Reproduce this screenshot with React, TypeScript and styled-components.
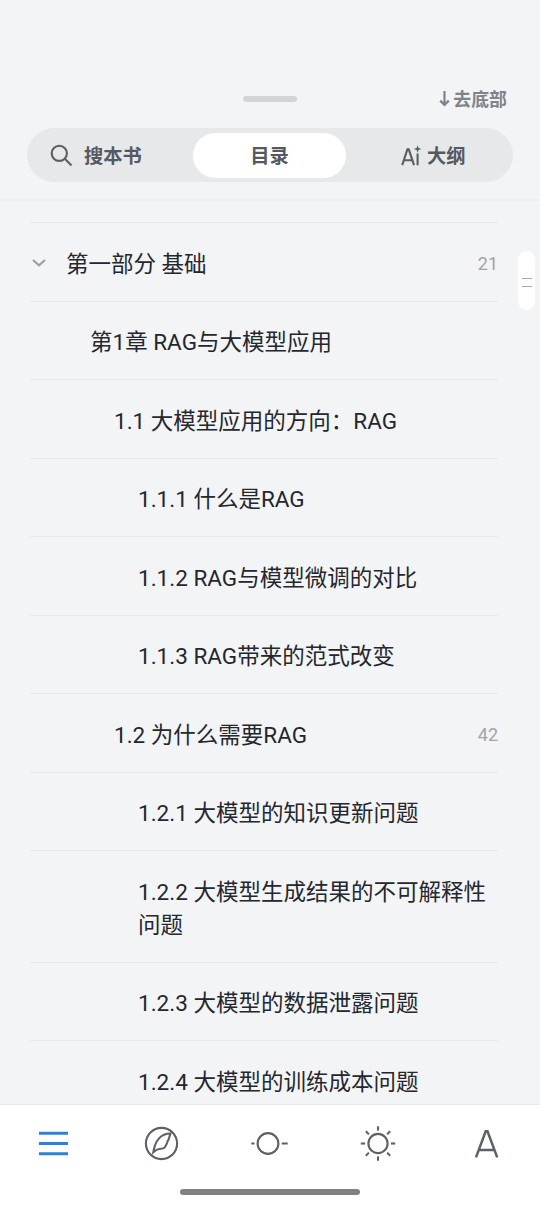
import React from "react";
import styled, { createGlobalStyle } from "styled-components";

const GlobalStyle = createGlobalStyle`
  * { box-sizing: border-box; }
  html, body { margin: 0; padding: 0; background: #f3f4f6; }
  body { font-family: Roboto, "Noto Sans CJK SC", sans-serif; color: #24272e; }
`;

const Screen = styled.main`
  width: 540px;
  height: 1206px;
  display: flex;
  flex-direction: column;
  position: relative;
  overflow: hidden;
  background: #f3f4f6;
`;

const SheetHeader = styled.header`
  flex: none;
  height: 201px;
  padding: 85px 27px 0;
  border-bottom: 2px solid #edeef0;
`;

const HandleRow = styled.div`
  height: 28px;
  display: grid;
  grid-template-columns: 1fr 54px 1fr;
  grid-template-rows: 28px;
  align-items: center;
`;

const DragHandle = styled.div`
  grid-column: 2;
  height: 6px;
  margin-bottom: 1px;
  border-radius: 3px;
  background: #d3d4d6;
`;

const ToBottom = styled.button`
  justify-self: end;
  display: flex;
  align-items: center;
  gap: 3px;
  border: 0;
  padding: 2px 0 0;
  margin-right: 6px;
  background: none;
  color: #7f838b;
  font: 600 17.9px/28px Roboto, "Noto Sans CJK SC", sans-serif;
`;

const ArrowDown = styled.svg`
  width: 11px;
  height: 17px;
  margin-bottom: 3px;
  fill: none;
  stroke: #7f838b;
  stroke-width: 2.2;
`;

const Tabs = styled.nav`
  height: 54px;
  margin-top: 15px;
  padding: 5px 13px 4px 13px;
  display: grid;
  grid-template-columns: 153px 153px 153px;
  border-radius: 27px;
  background: #e7e8ea;
`;

const Tab = styled.button<{ $active?: boolean; $inset?: number; $gap?: number }>`
  height: 45px;
  display: flex;
  align-items: center;
  justify-content: ${(p) => (p.$inset ? "flex-start" : "center")};
  gap: ${(p) => p.$gap ?? 0}px;
  padding: 0 0 0 ${(p) => p.$inset ?? 0}px;
  border: 0;
  border-radius: 23px;
  background: ${(p) => (p.$active ? "#fff" : "transparent")};
  color: #555961;
  font: 700 19.3px/28px Roboto, "Noto Sans CJK SC", sans-serif;
`;

const TabLabel = styled.span`
  padding-top: 2px;
`;

const Contents = styled.section`
  flex: 1;
  min-height: 0;
  overflow: hidden;
  padding: 21px 42px 0 30px;
`;

const Entry = styled.div<{ $indent: number }>`
  display: flex;
  align-items: flex-start;
  padding: 24.5px 0 20px ${(p) => p.$indent}px;
  border-top: 1px solid #e7e8ea;
`;

const Chevron = styled.svg`
  flex: none;
  width: 18px;
  height: 30px;
  margin-right: 18px;
`;

const EntryTitle = styled.span`
  flex: 1;
  font-size: 22.5px;
  line-height: 33px;
`;

const PageNumber = styled.span`
  font-size: 18px;
  line-height: 32px;
  color: #a0a4ac;
`;

const ScrollThumb = styled.div`
  position: absolute;
  left: 518px;
  top: 251px;
  width: 17px;
  height: 59px;
  border-radius: 9px;
  background: #fff;
  display: flex;
  flex-direction: column;
  align-items: center;
  justify-content: center;
  gap: 7px;
  padding-top: 3px;
`;

const Grip = styled.i`
  width: 10px;
  height: 1px;
  background: #a9abae;
`;

const BottomBar = styled.footer`
  flex: none;
  height: 102px;
  background: #fff;
  border-top: 1px solid #e8e9eb;
  display: flex;
  flex-direction: column;
  align-items: center;
`;

const Tools = styled.div`
  width: 540px;
  height: 78px;
  display: grid;
  grid-template-columns: repeat(5, 108px);
  align-items: center;
  justify-items: center;
`;

const ToolIcon = styled.svg<{ $active?: boolean }>`
  width: 40px;
  height: 40px;
  fill: none;
  stroke: ${(p) => (p.$active ? "#2b83d6" : "#5d6067")};
  stroke-width: ${(p) => (p.$active ? 2.9 : 2.1)};
`;

const HomeIndicator = styled.div`
  width: 180px;
  height: 6px;
  margin-top: 6px;
  border-radius: 3px;
  background: #808080;
`;

interface Item {
  title: string;
  indent: number;
  page?: number;
  open?: boolean;
}

const items: Item[] = [
  { title: "第一部分 基础", indent: 0, page: 21, open: true },
  { title: "第1章 RAG与大模型应用", indent: 60 },
  { title: "1.1 大模型应用的方向：RAG", indent: 84 },
  { title: "1.1.1 什么是RAG", indent: 108 },
  { title: "1.1.2 RAG与模型微调的对比", indent: 108 },
  { title: "1.1.3 RAG带来的范式改变", indent: 108 },
  { title: "1.2 为什么需要RAG", indent: 84, page: 42 },
  { title: "1.2.1 大模型的知识更新问题", indent: 108 },
  { title: "1.2.2 大模型生成结果的不可解释性问题", indent: 108 },
  { title: "1.2.3 大模型的数据泄露问题", indent: 108 },
  { title: "1.2.4 大模型的训练成本问题", indent: 108 },
];

const rays = [0, 45, 90, 135, 180, 225, 270, 315];

export default function App() {
  return (
    <Screen>
      <GlobalStyle />
      <SheetHeader>
        <HandleRow>
          <DragHandle />
          <ToBottom>
            <ArrowDown viewBox="0 0 11 17">
              <path d="M5.5 1v14M1.2 10.6l4.3 4.3 4.3-4.3" />
            </ArrowDown>
            去底部
          </ToBottom>
        </HandleRow>
        <Tabs>
          <Tab $inset={10} $gap={11}>
            <svg width="23" height="23" viewBox="0 0 23 23" fill="none" stroke="#5b5e65" strokeWidth="2.1">
              <circle cx="9.3" cy="9.3" r="7.6" />
              <path d="M14.8 14.8 21.5 21.5" />
            </svg>
            <TabLabel>搜本书</TabLabel>
          </Tab>
          <Tab $active>
            <TabLabel>目录</TabLabel>
          </Tab>
          <Tab $inset={55} $gap={5}>
            <svg width="21" height="22" viewBox="0 0 21 22" fill="none" stroke="#5b5e65" strokeWidth="2.1">
              <path d="M1.2 20.2 6.4 4.4h1.4L13 20.2M3.3 15.2h7.6M16.6 8.6v11.6" />
              <path
                d="M16.6.2l1 2.7 2.8 1.1-2.8 1.1-1 2.7-1-2.7-2.8-1.1 2.8-1.1z"
                fill="#5b5e65"
                stroke="none"
              />
            </svg>
            <TabLabel>大纲</TabLabel>
          </Tab>
        </Tabs>
      </SheetHeader>
      <Contents>
        {items.map((item) => (
          <Entry key={item.title} $indent={item.indent}>
            {item.open && (
              <Chevron viewBox="0 0 18 30" fill="none" stroke="#9b9ea5" strokeWidth="2.1">
                <path d="M3 12l6 5.3 6-5.3" />
              </Chevron>
            )}
            <EntryTitle>{item.title}</EntryTitle>
            {item.page && <PageNumber>{item.page}</PageNumber>}
          </Entry>
        ))}
      </Contents>
      <BottomBar>
        <Tools>
          <ToolIcon $active viewBox="0 0 40 40">
            <path d="M5 9.3h29M5 19.5h29M5 29.7h29" />
          </ToolIcon>
          <ToolIcon viewBox="0 0 40 40">
            <circle cx="19.5" cy="19.5" r="15.6" />
            <path d="M11.3 28.3C12.2 22.8 13.8 18 17 14.4c3.2-3.6 6.2-4.9 11.4-4.9-.4 2-1.2 3.5-1.5 5.2-.2 1.4-1.5 2-1.6 3.4-.1 1.7-1.2 2.2-1.6 3.6-.7 2.3-2.6 3-5.2 3.1-2.8.1-4.9 1.4-7.2 3.5z" />
          </ToolIcon>
          <ToolIcon viewBox="0 0 40 40">
            <circle cx="18" cy="19.5" r="10.4" />
            <path d="M1.3 19.5h3.2M31.7 19.5h6" />
          </ToolIcon>
          <ToolIcon viewBox="0 0 40 40">
            <circle cx="20" cy="19.5" r="9.6" />
            {rays.map((angle) => (
              <path key={angle} d="M20 2.3v4.3" transform={`rotate(${angle} 20 19.5)`} />
            ))}
          </ToolIcon>
          <ToolIcon viewBox="0 0 40 40">
            <path d="M10 33.4 19.7 7.2h1.8l9.7 26.2M13.2 25.9h14.8" strokeWidth="2.5" />
          </ToolIcon>
        </Tools>
        <HomeIndicator />
      </BottomBar>
      <ScrollThumb>
        <Grip />
        <Grip />
      </ScrollThumb>
    </Screen>
  );
}
